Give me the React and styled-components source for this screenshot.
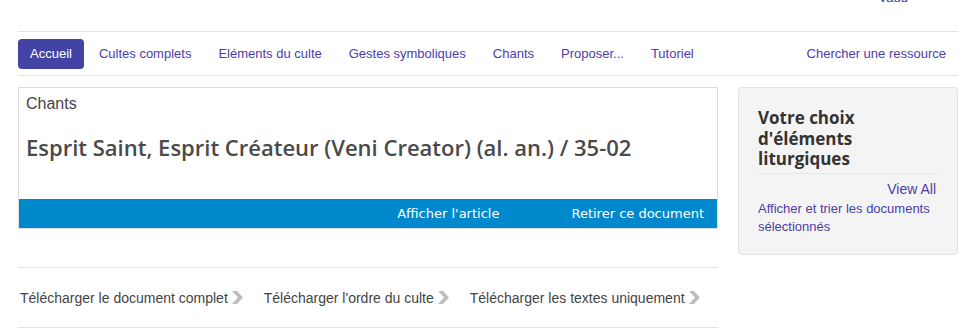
import React from "react";
import styled, { createGlobalStyle } from "styled-components";

const Global = createGlobalStyle`
  body {
    margin: 0;
    background: #fff;
    font-family: "Liberation Sans", Arial, sans-serif;
  }
`;

const Page = styled.div`
  width: 940px;
  margin: 0 18px;
`;

const TopBar = styled.div`
  height: 31px;
  border-bottom: 1px solid #e5e5e5;
  display: flex;
  justify-content: flex-end;
  align-items: flex-start;
  a {
    margin-top: -10px;
    margin-right: 50px;
    font-size: 13px;
    line-height: 15px;
    color: #3e3ea6;
    text-decoration: none;
  }
`;

const Nav = styled.nav`
  display: flex;
  align-items: center;
  padding: 7px 0 6px;
  border-bottom: 1px solid #e5e5e5;
  gap: 3px;
`;

const NavItem = styled.a`
  display: block;
  padding: 8px 12px;
  border-radius: 4px;
  font-size: 13px;
  line-height: 14px;
  text-decoration: none;
  color: ${(p) => (p.$active ? "#fff" : "#4a3dab")};
  background: ${(p) => (p.$active ? "#4343a6" : "transparent")};
  margin-left: ${(p) => (p.$push ? "auto" : "0")};
`;

const Row = styled.div`
  display: flex;
  gap: 20px;
  margin-top: 11px;
  align-items: flex-start;
`;

const Main = styled.div`
  width: 700px;
`;

const Card = styled.div`
  border: 1px solid #dddddd;
`;

const Kicker = styled.div`
  padding: 7px 0 0 7px;
  font-size: 16px;
  line-height: 18px;
  color: #444;
`;

const Title = styled.h1`
  margin: 0;
  padding: 20px 0 0 7px;
  height: 66px;
  box-sizing: content-box;
  font-family: "Open Sans", sans-serif;
  font-weight: 600;
  font-size: 22px;
  line-height: 28px;
  color: #4a4a4a;
`;

const ActionBar = styled.div`
  background: #0088cc;
  height: 29px;
  display: flex;
  justify-content: flex-end;
  align-items: center;
  gap: 72px;
  padding-right: 13px;
  a {
    color: #fff;
    font-family: "DejaVu Sans", Verdana, sans-serif;
    font-size: 13px;
    text-decoration: none;
  }
`;

const Downloads = styled.div`
  margin-top: 38px;
  border-top: 1px solid #e5e5e5;
  border-bottom: 1px solid #e5e5e5;
  height: 59px;
  display: flex;
  align-items: center;
  gap: 21px;
  padding-left: 2px;
`;

const DownloadLink = styled.a`
  display: flex;
  align-items: center;
  gap: 4px;
  font-size: 14px;
  color: #444;
  text-decoration: none;
`;

const Side = styled.aside`
  width: 220px;
  box-sizing: border-box;
  background: #f4f4f4;
  border: 1px solid #e2e2e2;
  border-radius: 4px;
  padding: 20px 19px 20px;
  height: 168px;
`;

const SideTitle = styled.h3`
  margin: 0;
  font-family: "Open Sans", sans-serif;
  font-weight: 700;
  font-size: 17px;
  line-height: 20.5px;
  color: #333;
  padding-bottom: 3px;
  border-bottom: 1px solid #e6e6e6;
`;

const ViewAll = styled.a`
  display: block;
  text-align: right;
  padding-right: 2px;
  margin-top: 7px;
  font-size: 14px;
  line-height: 17px;
  color: #4a3dab;
  text-decoration: none;
`;

const SideText = styled.a`
  display: block;
  margin-top: 2px;
  font-size: 13px;
  line-height: 18px;
  color: #4a3dab;
  text-decoration: none;
`;

const Chevron = () => (
  <svg width="11" height="13" viewBox="0 0 11 13">
    <polygon points="0,0 5,0 11,6.5 5,13 0,13 6,6.5" fill="#bdbdbd" />
  </svg>
);

const navItems = [
  "Cultes complets",
  "Eléments du culte",
  "Gestes symboliques",
  "Chants",
  "Proposer...",
  "Tutoriel",
];

const downloads = [
  "Télécharger le document complet",
  "Télécharger l'ordre du culte",
  "Télécharger les textes uniquement",
];

export default function App() {
  return (
    <Page>
      <Global />
      <TopBar>
        <a href="#">Vaud</a>
      </TopBar>
      <Nav>
        <NavItem $active href="#">Accueil</NavItem>
        {navItems.map((n) => (
          <NavItem key={n} href="#">{n}</NavItem>
        ))}
        <NavItem $push href="#">Chercher une ressource</NavItem>
      </Nav>
      <Row>
        <Main>
          <Card>
            <Kicker>Chants</Kicker>
            <Title>Esprit Saint, Esprit Créateur (Veni Creator) (al. an.) / 35-02</Title>
            <ActionBar>
              <a href="#">Afficher l'article</a>
              <a href="#">Retirer ce document</a>
            </ActionBar>
          </Card>
          <Downloads>
            {downloads.map((d) => (
              <DownloadLink key={d} href="#">
                {d}
                <Chevron />
              </DownloadLink>
            ))}
          </Downloads>
        </Main>
        <Side>
          <SideTitle>Votre choix d'éléments liturgiques</SideTitle>
          <ViewAll href="#">View All</ViewAll>
          <SideText href="#">Afficher et trier les documents sélectionnés</SideText>
        </Side>
      </Row>
    </Page>
  );
}
